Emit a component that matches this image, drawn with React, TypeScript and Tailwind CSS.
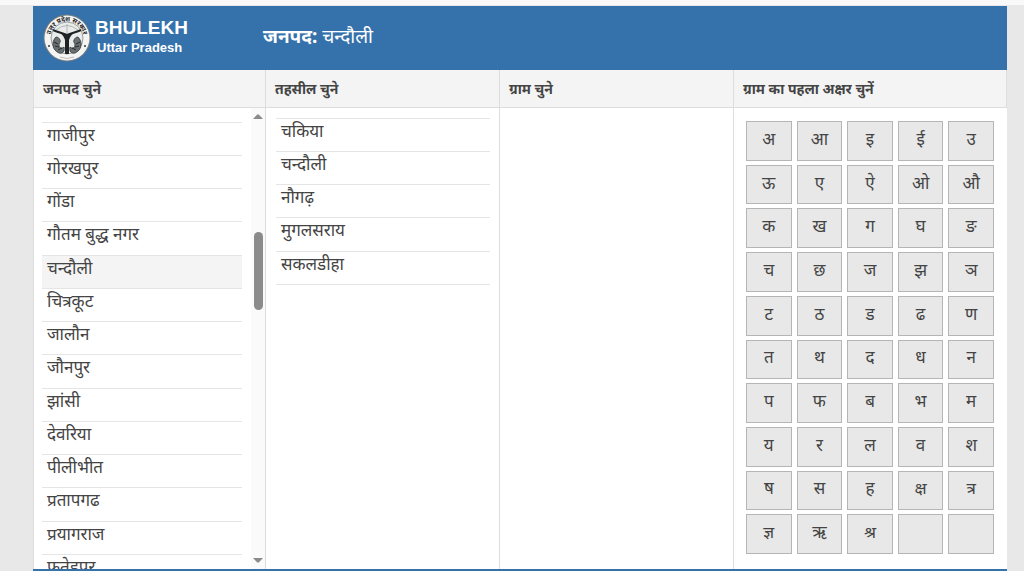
import clsx from "clsx";
import { useState } from "react";

const districts = [
  "गाजीपुर",
  "गोरखपुर",
  "गोंडा",
  "गौतम बुद्ध नगर",
  "चन्दौली",
  "चित्रकूट",
  "जालौन",
  "जौनपुर",
  "झांसी",
  "देवरिया",
  "पीलीभीत",
  "प्रतापगढ",
  "प्रयागराज",
  "फतेहपुर",
];

const tehsils = ["चकिया", "चन्दौली", "नौगढ़", "मुगलसराय", "सकलडीहा"];

const letters =
  "अ आ इ ई उ ऊ ए ऐ ओ औ क ख ग घ ङ च छ ज झ ञ ट ठ ड ढ ण त थ द ध न प फ ब भ म य र ल व श ष स ह क्ष त्र ज्ञ ऋ श्र"
    .split(" ")
    .concat(["", ""]);

const Emblem = () => (
  <svg
    viewBox="0 0 48 48"
    className="size-12 shrink-0 overflow-visible"
    aria-hidden="true"
  >
    <defs>
      <path id="ring" d="M8.2 29A16.6 16.6 0 1 1 39.8 29" />
    </defs>
    <circle cx="24" cy="24" r="23.5" fill="#777d80" />
    <circle cx="24" cy="24" r="22.5" fill="#f4f5f3" />
    <circle cx="24" cy="24" r="16" fill="#e9ecea" stroke="#9aa0a1" />
    <text
      fill="#222"
      fontSize="6.5"
      fontWeight="700"
      textAnchor="middle"
      fontFamily="'Noto Sans', 'Noto Sans Devanagari', sans-serif"
    >
      <textPath href="#ring" startOffset="50%">
        उत्तर प्रदेश सरकार
      </textPath>
    </text>
    <path d="M24 10v9M13 16q11-9 22 0" stroke="#b0b6b5" fill="none" />
    <path
      d="M10 16c4 2 9 3 14 5 5-2 10-3 14-5"
      fill="none"
      stroke="#202425"
      strokeWidth="2"
    />
    <path
      d="M17 19c3 2 4 4 5 7v14h4V26c1-3 2-5 5-7l-7 2z"
      fill="#202425"
    />
    <path
      d="M13 23c-5 5-4 13 3 16 4 1 6-2 5-6-2 2-5 1-5-2 0-2 2-3 1-5-1-2-2-3-4-3zM35 23c5 5 4 13-3 16-4 1-6-2-5-6 2 2 5 1 5-2 0-2-2-3-1-5 1-2 2-3 4-3z"
      fill="#6a7172"
      stroke="#303536"
      strokeWidth=".8"
    />
    <path
      d="M11 28l4 2M12 32l4 1M15 36l4-2M37 28l-4 2M36 32l-4 1M33 36l-4-2"
      stroke="#252a2b"
      strokeWidth="1"
    />
    <circle cx="6" cy="32" r="1" fill="#333" />
    <circle cx="42" cy="32" r="1" fill="#333" />
    <path d="M17 43q7 3 14 0" stroke="#bbb" fill="none" />
  </svg>
);

const ColumnTitle = ({
  children,
  last,
}: {
  children: string;
  last?: boolean;
}) => (
  <h2
    className={clsx(
      "h-[38px] shrink-0 border-b border-[#ddd] bg-[#f4f4f4] pl-[9px] text-sm leading-[38px] font-bold text-[#444]",
      last && "border-r",
    )}
  >
    {children}
  </h2>
);

type PlaceListProps = {
  items: string[];
  selected?: string;
  onSelect: (item: string) => void;
};

const PlaceList = ({ items, selected, onSelect }: PlaceListProps) => (
  <ul className="w-full border-t border-[#e5e5e5]">
    {items.map((item) => (
      <li
        key={item}
        className={clsx(
          "h-[33px] border-b border-[#e5e5e5] nth-[4n]:h-[34px]",
          item === selected && "bg-[#f4f4f4]",
        )}
      >
        <button
          type="button"
          onClick={() => onSelect(item)}
          className="block w-full pl-[5px] text-left text-[17px] leading-6 text-[#444]"
        >
          {item}
        </button>
      </li>
    ))}
  </ul>
);

const Scrollbar = () => (
  <div
    className="flex w-[14px] shrink-0 flex-col items-center bg-[#fafafa] py-[6px]"
    aria-hidden="true"
  >
    <svg viewBox="0 0 10 5" className="h-[5px] w-[10px] shrink-0">
      <path d="M0 5 4.2.5h1.6L10 5z" fill="#8b8b8b" />
    </svg>
    <div className="flex-[113]" />
    <div className="h-[78px] w-[9px] rounded-full bg-[#8b8b8b]" />
    <div className="flex-[248]" />
    <svg viewBox="0 0 10 5" className="h-[5px] w-[10px] shrink-0">
      <path d="M0 0h10L5.8 4.5H4.2z" fill="#8b8b8b" />
    </svg>
  </div>
);

const App = () => {
  const [district, setDistrict] = useState("चन्दौली");
  const [tehsil, setTehsil] = useState("");
  const [letter, setLetter] = useState("");

  return (
    <div
      lang="hi"
      className="flex h-screen flex-col overflow-hidden border-t-5 border-[#f9f9f9] bg-[#e8e8e8] pt-px font-['Noto_Sans','Noto_Sans_Devanagari',sans-serif]"
    >
      <div className="mr-[17px] ml-[33px] flex min-h-0 flex-1 flex-col border-b-2 border-[#3572ac] bg-white">
        <header className="flex h-16 shrink-0 items-center bg-[#3572ac] pl-[10px] text-white">
          <div className="flex w-[220px] items-center gap-1">
            <Emblem />
            <div className="font-['Liberation_Sans',sans-serif] font-bold">
              <h1 className="text-[19px] leading-5">BHULEKH</h1>
              <p className="pl-[2px] text-[13px] leading-5">Uttar Pradesh</p>
            </div>
          </div>
          <p className="pb-1 text-[19px]">
            <b>जनपद:</b> {district}
          </p>
        </header>
        <main className="grid min-h-0 flex-1 grid-cols-[232fr_234fr_234fr_274fr] grid-rows-[minmax(0,1fr)]">
          <section className="flex min-w-0 flex-col border-l border-[#ddd]">
            <ColumnTitle>जनपद चुने</ColumnTitle>
            <div className="flex min-h-0 flex-1 overflow-hidden">
              <div className="flex-1 overflow-hidden pt-[14px] pr-[9px] pl-[8px]">
                <PlaceList
                  items={districts}
                  selected={district}
                  onSelect={setDistrict}
                />
              </div>
              <Scrollbar />
            </div>
          </section>
          <section className="flex min-w-0 flex-col border-l border-[#ddd]">
            <ColumnTitle>तहसील चुने</ColumnTitle>
            <div className="pt-[10px] pr-[9px] pl-[10px]">
              <PlaceList
                items={tehsils}
                selected={tehsil}
                onSelect={setTehsil}
              />
            </div>
          </section>
          <section className="flex min-w-0 flex-col border-l border-[#ddd]">
            <ColumnTitle>ग्राम चुने</ColumnTitle>
          </section>
          <section className="flex min-w-0 flex-col border-l border-[#ddd]">
            <ColumnTitle last>ग्राम का पहला अक्षर चुनें</ColumnTitle>
            <div className="grid min-h-0 flex-1 grid-cols-5 grid-rows-10 gap-x-[5px] gap-y-1 pt-[13px] pr-[13px] pb-[15px] pl-3">
              {letters.map((l, index) => (
                <button
                  key={index}
                  type="button"
                  aria-label={l || "रिक्त"}
                  aria-pressed={l !== "" && l === letter}
                  onClick={() => setLetter(l)}
                  className="min-h-0 border border-[#b5b5b5] bg-[#e8e8e8] pb-1 text-[17px] leading-6 text-[#444]"
                >
                  {l}
                </button>
              ))}
            </div>
          </section>
        </main>
      </div>
    </div>
  );
};

export default App;
